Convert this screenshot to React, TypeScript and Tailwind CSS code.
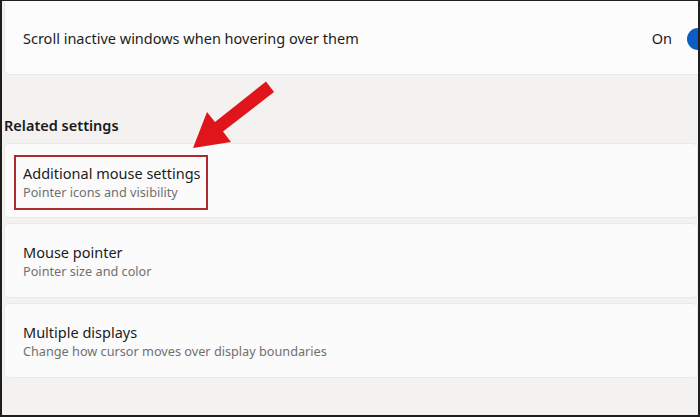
import React from 'react';

interface RowProps {
  title: string;
  subtitle: string;
  highlight?: boolean;
}

const SettingRow: React.FC<RowProps> = ({ title, subtitle, highlight }) => (
  <div className="h-[75px] bg-[#fbfbfb] border border-[#ebe9e8] rounded-[5px] flex items-center pl-[9px]">
    <div
      className={
        highlight
          ? 'border-2 border-[#ad2a2e] pl-[7px] pt-[6px] pb-[6px] mt-[3px] w-[194px] whitespace-nowrap'
          : 'pl-[9px] pt-[2px] whitespace-nowrap'
      }
    >
      <div className="text-[14.5px] leading-[20px] text-[#1c1c1c]">{title}</div>
      <div className="text-[12.7px] leading-[19px] text-[#707070]">{subtitle}</div>
    </div>
  </div>
);

const App: React.FC = () => {
  return (
    <div
      className="relative w-[700px] h-[417px] overflow-hidden bg-[#f4f2f1] border-t border-l-2 border-r-2 border-b-2 border-[#1e1e1e] pl-[2px]"
      style={{ fontFamily: '"Noto Sans", "Open Sans", sans-serif' }}
    >
      {/* Scroll inactive windows card, top cut off */}
      <div className="-mt-[6px] h-[80px] bg-[#fcfcfc] border border-[#ebe9e8] rounded-[5px] flex items-center pl-[18px] pt-[8px] mr-[-30px]">
        <span className="text-[14.5px] text-[#1c1c1c] flex-1">Scroll inactive windows when hovering over them</span>
        <span className="text-[14.5px] text-[#1c1c1c] mr-[15px]">On</span>
        <div className="w-[40px] h-[22px] rounded-full bg-[#0a5dc2]" />
      </div>

      <div className="pt-[40px] pb-[8px] text-[14.5px] font-semibold text-[#1a1a1a] leading-[20px]">
        Related settings
      </div>

      <div className="flex flex-col gap-[5px]">
        <SettingRow title="Additional mouse settings" subtitle="Pointer icons and visibility" highlight />
        <SettingRow title="Mouse pointer" subtitle="Pointer size and color" />
        <SettingRow title="Multiple displays" subtitle="Change how cursor moves over display boundaries" />
      </div>

      {/* red annotation arrow */}
      <svg className="absolute left-0 top-0" width="700" height="417" viewBox="0 0 700 417">
        <polygon
          points="191,147 229,141 221,130.5 272,91 264,80.5 213,121 205,111"
          fill="#e0141b"
        />
      </svg>
    </div>
  );
};

export default App;
